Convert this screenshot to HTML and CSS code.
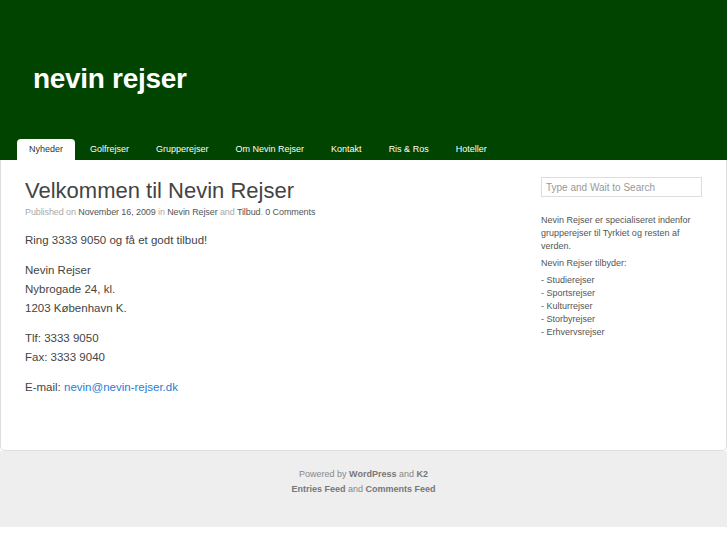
FILE: index.html
```html
<!DOCTYPE html>
<html lang="da">
<head>
    <meta charset="UTF-8">
    <title>Nevin Rejser</title>
    <link rel="stylesheet" href="styles.css">
</head>
<body>
    <div class="page">
        <div class="header">
            <h1 class="blog-title">nevin rejser</h1>
            <ul class="menu">
                <li class="current"><a href="#">Nyheder</a></li>
                <li><a href="#">Golfrejser</a></li>
                <li><a href="#">Grupperejser</a></li>
                <li><a href="#">Om Nevin Rejser</a></li>
                <li><a href="#">Kontakt</a></li>
                <li><a href="#">Ris &amp; Ros</a></li>
                <li><a href="#">Hoteller</a></li>
            </ul>
        </div>
        <div class="content">
            <div class="primary">
                <h2 class="entry-title">Velkommen til Nevin Rejser</h2>
                <div class="entry-meta">
                    Published on <a href="#">November 16, 2009</a> in <a href="#">Nevin Rejser</a> and <a href="#">Tilbud</a>. <a href="#">0 Comments</a>
                </div>
                <div class="entry-content">
                    <p>Ring 3333 9050 og få et godt tilbud!</p>
                    <p>Nevin Rejser<br>Nybrogade 24, kl.<br>1203 København K.</p>
                    <p>Tlf: 3333 9050<br>Fax: 3333 9040</p>
                    <p>E-mail: <a href="#">nevin@nevin-rejser.dk</a></p>
                </div>
            </div>
            <div class="sidebar">
                <input class="search" type="text" placeholder="Type and Wait to Search">
                <p>Nevin Rejser er specialiseret indenfor grupperejser til Tyrkiet og resten af verden.</p>
                <p>Nevin Rejser tilbyder:</p>
                <p>- Studierejser<br>- Sportsrejser<br>- Kulturrejser<br>- Storbyrejser<br>- Erhvervsrejser</p>
            </div>
        </div>
    </div>
    <div class="footer">
        <p>Powered by <a href="#">WordPress</a> and <a href="#">K2</a></p>
        <p><a href="#">Entries Feed</a> and <a href="#">Comments Feed</a></p>
    </div>
</body>
</html>
```

FILE: styles.css
```css
body {
    margin: 0;
    padding: 0;
    background: #fff;
    font-family: 'Liberation Sans', Arial, sans-serif;
    color: #444;
}
a {
    text-decoration: none;
}
.page {
    width: 727px;
    box-sizing: border-box;
    background: #fff;
    border: 1px solid #ddd;
    border-top: none;
    border-radius: 0 0 5px 5px;
    height: 451px;
}
.header {
    background: #004400;
    height: 160px;
    display: flex;
    flex-direction: column;
    justify-content: flex-end;
    margin: 0 -1px 0 -1px;
}
.blog-title {
    margin: 0 0 44px 33px;
    font-size: 28px;
    font-weight: bold;
    color: #fff;
    letter-spacing: -0.3px;
}
.menu {
    list-style: none;
    margin: 0 0 0 17px;
    padding: 0;
    display: flex;
    gap: 3px;
}
.menu a {
    display: block;
    padding: 5px 12px 0 12px;
    height: 16px;
    font-size: 9px;
    color: #fff;
    border-radius: 4px 4px 0 0;
}
.menu .current a {
    background: #fff;
    color: #333;
}
.content {
    display: flex;
    padding: 17px 24px 0 24px;
}
.primary {
    flex: 1;
}
.entry-title {
    margin: 0;
    font-size: 22px;
    font-weight: normal;
    color: #444;
    line-height: 28px;
}
.entry-meta {
    font-size: 9px;
    color: #aaa;
    margin-top: 2px;
    letter-spacing: -0.1px;
}
.entry-meta a {
    color: #555;
}
.entry-content {
    margin-top: 14px;
    font-size: 11.5px;
    line-height: 19px;
    color: #444;
}
.entry-content p {
    margin: 0 0 11px 0;
}
.entry-content a {
    color: #2a7bd8;
}
.sidebar {
    width: 161px;
    font-size: 9px;
    color: #555;
    line-height: 13px;
}
.search {
    display: block;
    width: 161px;
    height: 20px;
    box-sizing: border-box;
    margin: 0 0 17px 0;
    border: 1px solid #ddd;
    padding: 0 4px;
    font-family: inherit;
    font-size: 10px;
    color: #999;
}
.search::placeholder {
    color: #999;
}
.sidebar p {
    margin: 0 0 4px 0;
}
.footer {
    background: #eee;
    height: 76px;
    padding-top: 16px;
    box-sizing: border-box;
    text-align: center;
    font-size: 9px;
    color: #888;
    line-height: 15px;
}
.footer p {
    margin: 0;
}
.footer a {
    color: #777;
    font-weight: bold;
}
```
